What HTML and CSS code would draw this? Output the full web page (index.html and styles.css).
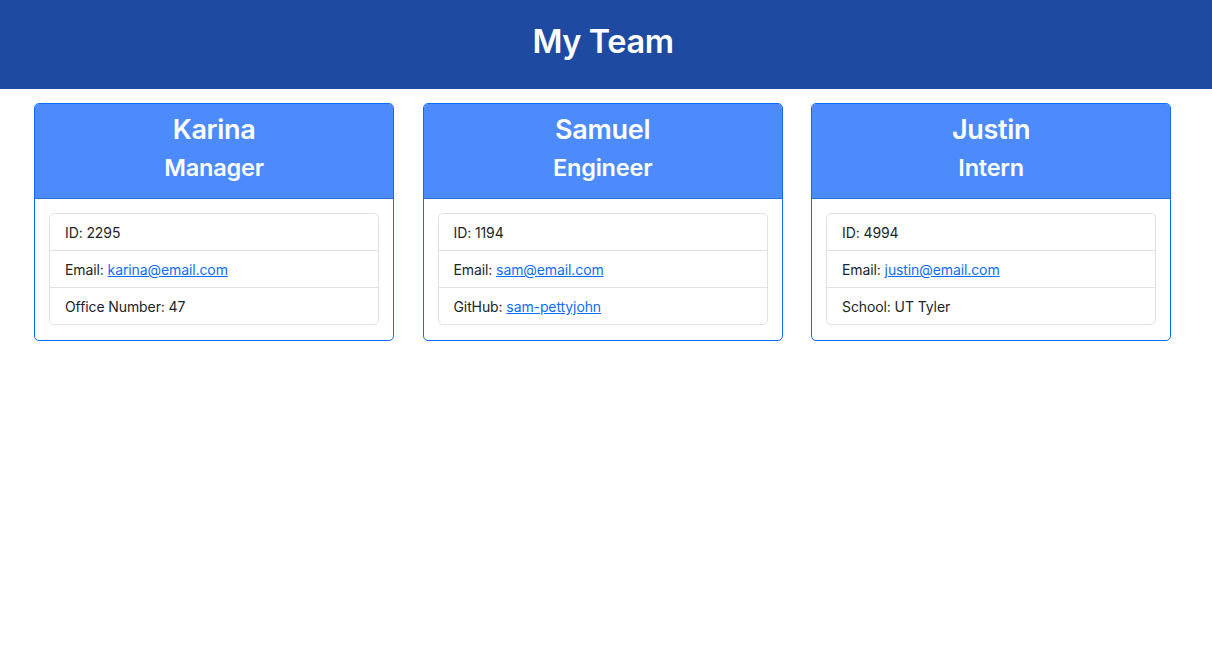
FILE: index.html
```html
<!DOCTYPE html>
<html lang="en">
<head>
<meta charset="utf-8">
<title>My Team</title>
<link rel="stylesheet" href="styles.css">
</head>
<body>
<header class="banner"><h1 class="banner-title">My Team</h1></header>
<main class="team">
  <section class="card">
    <div class="card-head"><h2 class="name">Karina</h2><h3 class="role">Manager</h3></div>
    <div class="card-body">
      <ul class="list">
        <li class="item">ID: 2295</li>
        <li class="item">Email: <a href="#">karina@email.com</a></li>
        <li class="item">Office Number: 47</li>
      </ul>
    </div>
  </section>
  <section class="card">
    <div class="card-head"><h2 class="name">Samuel</h2><h3 class="role">Engineer</h3></div>
    <div class="card-body">
      <ul class="list">
        <li class="item">ID: 1194</li>
        <li class="item">Email: <a href="#">sam@email.com</a></li>
        <li class="item">GitHub: <a href="#">sam-pettyjohn</a></li>
      </ul>
    </div>
  </section>
  <section class="card">
    <div class="card-head"><h2 class="name">Justin</h2><h3 class="role">Intern</h3></div>
    <div class="card-body">
      <ul class="list">
        <li class="item">ID: 4994</li>
        <li class="item">Email: <a href="#">justin@email.com</a></li>
        <li class="item">School: UT Tyler</li>
      </ul>
    </div>
  </section>
</main>
</body>
</html>
```
FILE: styles.css
```css
* { box-sizing: border-box; }
body {
  margin: 0;
  font-family: Inter, "Liberation Sans", sans-serif;
  color: #212529;
  background: #fff;
}
.banner {
  height: 89px;
  background: #1e4ba1;
  display: flex;
  align-items: center;
  justify-content: center;
  padding: 0 6px 7px 0;
}
.banner-title {
  margin: 0;
  color: #fff;
  font-size: 32.5px;
  line-height: 1.2;
  font-weight: 600;
  letter-spacing: -0.4px;
}
.team {
  display: flex;
  gap: 28.25px;
  padding: 14px 0 0 34px;
}
.card {
  width: 360.25px;
  border: 1px solid #0d6efd;
  border-radius: 5px;
  overflow: hidden;
}
.card-head {
  background: #4d8bfc;
  border-bottom: 1px solid #2f6fd8;
  color: #fff;
  text-align: center;
  padding: 10px 16px 7.5px;
}
.name {
  margin: 0 0 8px;
  font-size: 27px;
  font-weight: 600;
  line-height: 1.2;
  letter-spacing: -0.3px;
}
.role {
  margin: 0 0 8px;
  font-size: 23.5px;
  font-weight: 600;
  line-height: 1.2;
  letter-spacing: -0.2px;
}
.card-body {
  padding: 14px 14px 15px;
}
.list {
  list-style: none;
  margin: 0;
  padding: 0;
  border: 1px solid #dee2e6;
  border-radius: 5px;
}
.item {
  font-size: 14px;
  line-height: 21px;
  padding: 8px 15px 7px;
  border-top: 1px solid #dee2e6;
  letter-spacing: -0.1px;
}
.item:first-child { border-top: 0; }
.item a { color: #0d6efd; }
```
